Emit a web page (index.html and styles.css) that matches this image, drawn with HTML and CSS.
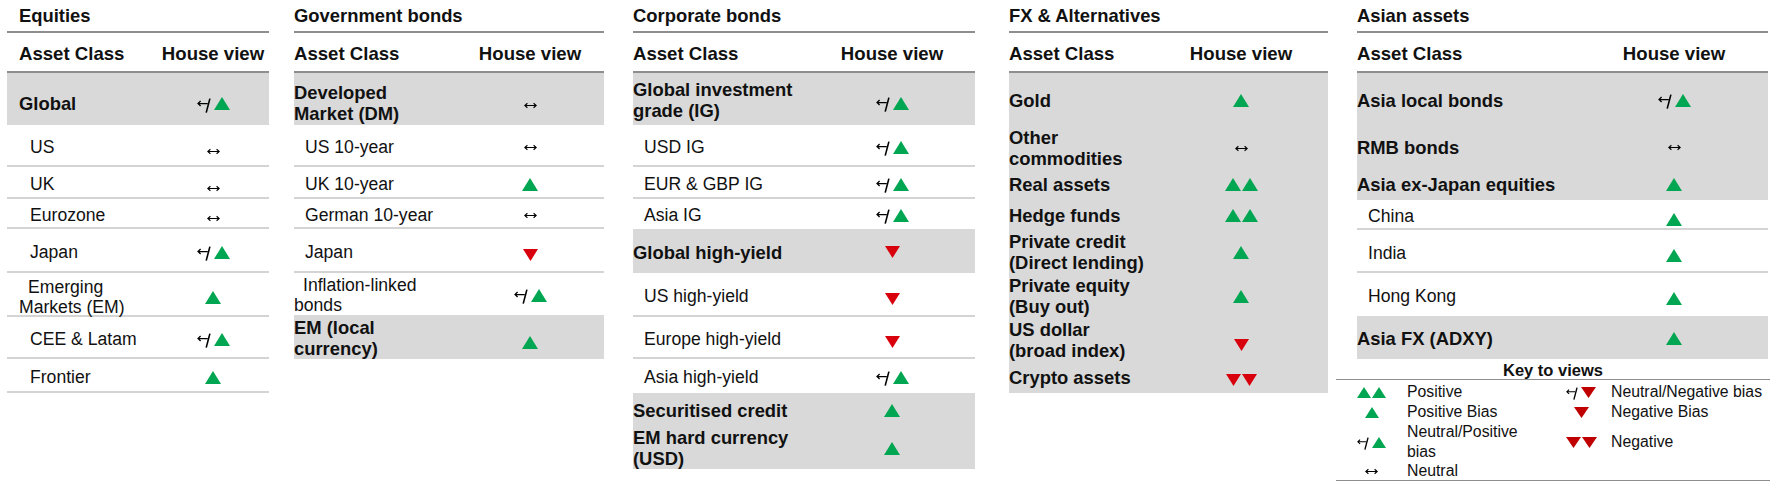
FILE: index.html
```html
<!DOCTYPE html>
<html lang="en">
<head>
<meta charset="utf-8">
<title>House views</title>
<link rel="stylesheet" href="styles.css">
</head>
<body>
<svg class="defs" aria-hidden="true">
  <symbol id="u" viewBox="0 0 16 13" preserveAspectRatio="none"><path d="M8 0L16 13H0Z"/></symbol>
  <symbol id="d" viewBox="0 0 16 13" preserveAspectRatio="none"><path d="M0 0H16L8 13Z"/></symbol>
  <symbol id="n" viewBox="0 0 13 7"><path d="M0.8 3.5H12.2M3.4 1.2L0.8 3.5L3.4 5.8M9.6 1.2L12.2 3.5L9.6 5.8" fill="none" stroke="#000" stroke-width="1.15"/></symbol>
  <symbol id="s" viewBox="0 0 14 15"><path d="M1 5.5H10.8M3.6 3L1 5.5L3.6 8" fill="none" stroke="#000" stroke-width="1.25"/><path d="M12.9 0.6L9.2 14.6" fill="none" stroke="#000" stroke-width="1.6"/></symbol>
</svg>

<div class="page">

  <section class="tbl t1">
    <div class="title">Equities</div>
    <div class="hdr"><div class="l">Asset Class</div><div class="v">House view</div></div>
    <div class="row g h52 r1"><div class="l">Global</div><div class="v"><svg class="ic sl"><use href="#s"/></svg><svg class="ic tu"><use href="#u"/></svg></div></div>
    <div class="row bd h42"><div class="l">US</div><div class="v lo2"><svg class="ic ar"><use href="#n"/></svg></div></div>
    <div class="row bd h32"><div class="l">UK</div><div class="v lo2"><svg class="ic ar"><use href="#n"/></svg></div></div>
    <div class="row bd h30"><div class="l">Eurozone</div><div class="v lo"><svg class="ic ar"><use href="#n"/></svg></div></div>
    <div class="row bd h44"><div class="l">Japan</div><div class="v"><svg class="ic sl"><use href="#s"/></svg><svg class="ic tu"><use href="#u"/></svg></div></div>
    <div class="row bd h44 w"><div class="l">Emerging<br>Markets (EM)</div><div class="v"><svg class="ic tu"><use href="#u"/></svg></div></div>
    <div class="row bd h42"><div class="l">CEE &amp; Latam</div><div class="v"><svg class="ic sl"><use href="#s"/></svg><svg class="ic tu"><use href="#u"/></svg></div></div>
    <div class="row bd h34"><div class="l">Frontier</div><div class="v"><svg class="ic tu"><use href="#u"/></svg></div></div>
  </section>

  <section class="tbl t2">
    <div class="title">Government bonds</div>
    <div class="hdr"><div class="l">Asset Class</div><div class="v">House view</div></div>
    <div class="row g h52 r1"><div class="l">Developed<br>Market (DM)</div><div class="v lo"><svg class="ic ar"><use href="#n"/></svg></div></div>
    <div class="row bd h42"><div class="l">US 10-year</div><div class="v"><svg class="ic ar"><use href="#n"/></svg></div></div>
    <div class="row bd h32"><div class="l">UK 10-year</div><div class="v"><svg class="ic tu"><use href="#u"/></svg></div></div>
    <div class="row bd h30"><div class="l">German 10-year</div><div class="v"><svg class="ic ar"><use href="#n"/></svg></div></div>
    <div class="row bd h44"><div class="l">Japan</div><div class="v lo"><svg class="ic td"><use href="#d"/></svg></div></div>
    <div class="row h42 w"><div class="l">Inflation-linked<br>bonds</div><div class="v"><svg class="ic sl"><use href="#s"/></svg><svg class="ic tu"><use href="#u"/></svg></div></div>
    <div class="row g h44"><div class="l">EM (local<br>currency)</div><div class="v lo2"><svg class="ic tu"><use href="#u"/></svg></div></div>
  </section>

  <section class="tbl t3">
    <div class="title">Corporate bonds</div>
    <div class="hdr"><div class="l">Asset Class</div><div class="v">House view</div></div>
    <div class="row g h52 r1"><div class="l">Global investment<br>grade (IG)</div><div class="v lo"><svg class="ic sl"><use href="#s"/></svg><svg class="ic tu"><use href="#u"/></svg></div></div>
    <div class="row bd h42"><div class="l">USD IG</div><div class="v"><svg class="ic sl"><use href="#s"/></svg><svg class="ic tu"><use href="#u"/></svg></div></div>
    <div class="row bd h32"><div class="l">EUR &amp; GBP IG</div><div class="v"><svg class="ic sl"><use href="#s"/></svg><svg class="ic tu"><use href="#u"/></svg></div></div>
    <div class="row h30"><div class="l">Asia IG</div><div class="v"><svg class="ic sl"><use href="#s"/></svg><svg class="ic tu"><use href="#u"/></svg></div></div>
    <div class="row g h44"><div class="l">Global high-yield</div><div class="v"><svg class="ic td"><use href="#d"/></svg></div></div>
    <div class="row bd h44"><div class="l">US high-yield</div><div class="v lo"><svg class="ic td"><use href="#d"/></svg></div></div>
    <div class="row bd h42"><div class="l">Europe high-yield</div><div class="v lo"><svg class="ic td"><use href="#d"/></svg></div></div>
    <div class="row h34"><div class="l">Asia high-yield</div><div class="v"><svg class="ic sl"><use href="#s"/></svg><svg class="ic tu"><use href="#u"/></svg></div></div>
    <div class="row g h32"><div class="l">Securitised credit</div><div class="v"><svg class="ic tu"><use href="#u"/></svg></div></div>
    <div class="row g h44"><div class="l">EM hard currency<br>(USD)</div><div class="v"><svg class="ic tu"><use href="#u"/></svg></div></div>
  </section>

  <section class="tbl t4">
    <div class="title">FX &amp; Alternatives</div>
    <div class="hdr"><div class="l">Asset Class</div><div class="v">House view</div></div>
    <div class="row g h52 r1"><div class="l">Gold</div><div class="v"><svg class="ic tu"><use href="#u"/></svg></div></div>
    <div class="row g h42"><div class="l">Other<br>commodities</div><div class="v"><svg class="ic ar"><use href="#n"/></svg></div></div>
    <div class="row g h32"><div class="l">Real assets</div><div class="v"><svg class="ic tu"><use href="#u"/></svg><svg class="ic tu"><use href="#u"/></svg></div></div>
    <div class="row g h30"><div class="l">Hedge funds</div><div class="v"><svg class="ic tu"><use href="#u"/></svg><svg class="ic tu"><use href="#u"/></svg></div></div>
    <div class="row g h44"><div class="l">Private credit<br>(Direct lending)</div><div class="v"><svg class="ic tu"><use href="#u"/></svg></div></div>
    <div class="row g h44"><div class="l">Private equity<br>(Buy out)</div><div class="v"><svg class="ic tu"><use href="#u"/></svg></div></div>
    <div class="row g h42"><div class="l">US dollar<br>(broad index)</div><div class="v lo2"><svg class="ic td"><use href="#d"/></svg></div></div>
    <div class="row g h34"><div class="l">Crypto assets</div><div class="v lo"><svg class="ic td"><use href="#d"/></svg><svg class="ic td"><use href="#d"/></svg></div></div>
  </section>

  <section class="tbl t5">
    <div class="title">Asian assets</div>
    <div class="hdr"><div class="l">Asset Class</div><div class="v">House view</div></div>
    <div class="row g h52 r1"><div class="l">Asia local bonds</div><div class="v"><svg class="ic sl"><use href="#s"/></svg><svg class="ic tu"><use href="#u"/></svg></div></div>
    <div class="row g h42"><div class="l">RMB bonds</div><div class="v"><svg class="ic ar"><use href="#n"/></svg></div></div>
    <div class="row g h33"><div class="l">Asia ex-Japan equities</div><div class="v"><svg class="ic tu"><use href="#u"/></svg></div></div>
    <div class="row bd h30"><div class="l">China</div><div class="v lo"><svg class="ic tu"><use href="#u"/></svg></div></div>
    <div class="row bd h43"><div class="l">India</div><div class="v lo"><svg class="ic tu"><use href="#u"/></svg></div></div>
    <div class="row h43"><div class="l">Hong Kong</div><div class="v lo"><svg class="ic tu"><use href="#u"/></svg></div></div>
    <div class="row g h43"><div class="l">Asia FX (ADXY)</div><div class="v"><svg class="ic tu"><use href="#u"/></svg></div></div>

    <div class="key">
      <div class="key-t">Key to views</div>
      <div class="key-g">
        <div class="i"><svg class="ic tu"><use href="#u"/></svg><svg class="ic tu"><use href="#u"/></svg></div>
        <div class="t">Positive</div>
        <div class="i"><svg class="ic sl"><use href="#s"/></svg><svg class="ic td"><use href="#d"/></svg></div>
        <div class="t">Neutral/Negative bias</div>

        <div class="i"><svg class="ic tu"><use href="#u"/></svg></div>
        <div class="t">Positive Bias</div>
        <div class="i"><svg class="ic td"><use href="#d"/></svg></div>
        <div class="t">Negative Bias</div>

        <div class="i"><svg class="ic sl"><use href="#s"/></svg><svg class="ic tu"><use href="#u"/></svg></div>
        <div class="t">Neutral/Positive<br>bias</div>
        <div class="i"><svg class="ic td"><use href="#d"/></svg><svg class="ic td"><use href="#d"/></svg></div>
        <div class="t">Negative</div>

        <div class="i"><svg class="ic ar"><use href="#n"/></svg></div>
        <div class="t">Neutral</div>
        <div class="i"></div>
        <div class="t"></div>
      </div>
    </div>
  </section>

</div>
</body>
</html>
```

FILE: styles.css
```css
* {
  box-sizing: border-box;
}

body {
  margin: 0;
  background: #ffffff;
  color: #111111;
  font-family: "Liberation Sans", Arial, sans-serif;
}

.defs {
  display: block;
  width: 0;
  height: 0;
  overflow: hidden;
}

.page {
  display: flex;
  align-items: flex-start;
  padding-left: 7px;
}

.tbl {
  flex: none;
  --pl: 0px;
}

.t1 { width: 262px; --c1: 150px; --pl: 12px; }
.t2 { width: 310px; --c1: 162px; margin-left: 25px; }
.t3 { width: 342px; --c1: 176px; margin-left: 29px; }
.t4 { width: 319px; --c1: 145px; margin-left: 34px; }
.t5 { width: 411px; --c1: 223px; margin-left: 29px; }

.title {
  height: 33px;
  padding: 5px 0 0 var(--pl);
  border-bottom: 2px solid #8e8e8e;
  font-weight: 700;
  font-size: 18.4px;
  line-height: 21px;
}

.hdr,
.row {
  display: grid;
  grid-template-columns: var(--c1) 1fr;
  align-items: center;
}

.hdr {
  height: 40px;
  padding-top: 10px;
  align-items: start;
  border-bottom: 2px solid #8e8e8e;
  font-weight: 700;
  font-size: 18.6px;
  line-height: 21px;
}

.hdr .l {
  padding-left: var(--pl);
}

.hdr .v {
  text-align: center;
}

.row {
  padding-top: 2px;
}

.row .l {
  padding-left: calc(var(--pl) + 11px);
  font-size: 17.6px;
  line-height: 20px;
}

.row.w .l {
  padding-left: var(--pl);
  text-indent: 9px;
}

.row.g {
  background: #d9d9d9;
}

.row.g .l {
  padding-left: var(--pl);
  font-weight: 700;
  font-size: 18.4px;
  line-height: 21px;
}

.row.bd {
  padding-top: 4px;
  border-bottom: 2px solid #d4d4d4;
}

.t1 .r1 { padding-top: 9px; }
.t2 .r1 { padding-top: 7px; }

.h30 { height: 30px; }
.h32 { height: 32px; }
.h33 { height: 33px; }
.h34 { height: 34px; }
.h42 { height: 42px; }
.h43 { height: 43px; }
.h44 { height: 44px; }
.h52 { height: 52px; }

.v {
  display: flex;
  justify-content: center;
  align-items: center;
  gap: 1px;
}

.v.lo { padding-top: 6px; }
.v.lo2 { padding-top: 9px; }

.ic {
  display: block;
  flex: none;
}

.tu {
  width: 16px;
  height: 13px;
  fill: #00a651;
}

.td {
  width: 15px;
  height: 12px;
  fill: #d9000d;
}

.ar {
  width: 13px;
  height: 7px;
}

.sl {
  width: 14px;
  height: 15px;
  margin-top: 3px;
  margin-right: 2px;
}

.key {
  margin: 0 -2px 0 -21px;
}

.key-t {
  padding-top: 2px;
  text-align: center;
  font-weight: 700;
  font-size: 16.5px;
  line-height: 18px;
  border-bottom: 1px solid #8e8e8e;
}

.key-g {
  display: grid;
  grid-template-columns: 71px 144px 60px 1fr;
  grid-template-rows: 20px 20px 40px 18px;
  align-items: center;
  padding-top: 2px;
  font-size: 15.8px;
  line-height: 20px;
  border-bottom: 1px solid #8e8e8e;
}

.key-g .i {
  display: flex;
  justify-content: center;
  align-items: center;
  gap: 1px;
}

.key-g .t {
  white-space: nowrap;
}

.key .tu {
  width: 14px;
  height: 11px;
}

.key .td {
  width: 15px;
  height: 11px;
  fill: #c00000;
}

.key .sl {
  width: 12px;
  height: 13px;
}
```
